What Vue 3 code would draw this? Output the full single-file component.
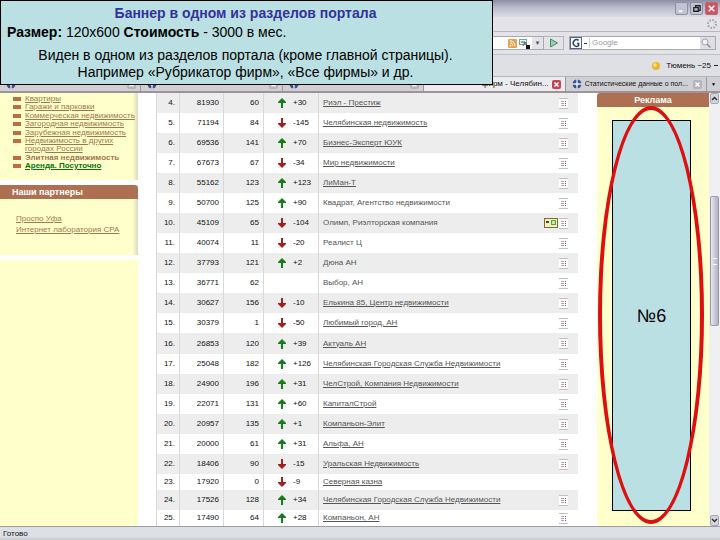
<template>
  <div class="window">
    <header class="chrome">
      <div class="title-bar">
        <button class="win-btn" aria-label="Свернуть">
          <svg viewBox="0 0 12 12"><path d="M3 9h4" stroke="#fff" stroke-width="2" /></svg>
        </button>
        <button class="win-btn" aria-label="Восстановить">
          <svg viewBox="0 0 12 12"><path d="M5 5V3h5v5H8M3 5h5v4H3z" fill="none" stroke="#222" stroke-width="1.4" /></svg>
        </button>
        <button class="win-btn win-close" aria-label="Закрыть">
          <svg viewBox="0 0 12 12"><path d="M3 3l6 6M9 3l-6 6" stroke="#fff" stroke-width="1.8" /></svg>
        </button>
      </div>

      <div class="menu-bar">
        <svg class="throbber" viewBox="0 0 12 12">
          <circle cx="6" cy="6" r="4" fill="none" stroke="#a4a4a8" stroke-width="2" stroke-dasharray="1.6 1.5" />
        </svg>
      </div>

      <div class="tool-bar">
        <div class="address">
          <input class="address-input" type="text" aria-label="Адрес" />
          <svg class="rss" viewBox="0 0 9 9">
            <rect width="9" height="9" rx="1" fill="#eba04c" />
            <circle cx="2.5" cy="6.6" r="0.9" fill="#fff" />
            <path d="M2 3.8a3 3 0 0 1 3 3M2 1.8a5 5 0 0 1 5 5" fill="none" stroke="#fff" />
          </svg>
          <svg class="translate" viewBox="0 0 11 11">
            <rect x="0.5" y="1.5" width="7" height="5" fill="#e5f1ee" stroke="#73a29f" />
            <path d="M2 4h4M4 8l2-4 2 4" stroke="#465b60" fill="none" />
            <rect x="7" y="7" width="4" height="4" fill="#151515" />
          </svg>
          <button class="drop" aria-label="История">▼</button>
        </div>
        <button class="go" aria-label="Перейти">
          <svg viewBox="0 0 10 10"><path d="M1.5 1l7 4-7 4z" fill="#9bceb0" stroke="#3d8c62" /></svg>
        </button>
        <div class="search">
          <button class="engine" aria-label="Поисковая система">
            <svg viewBox="0 0 12 12">
              <rect x="0.5" y="0.5" width="11" height="11" fill="#fff" stroke="#4c6584" />
              <path d="M8.6 3.4A3.3 3.3 0 1 0 8.6 8.6V6.4H7" fill="none" stroke="#27436a" stroke-width="1.5" />
            </svg>
          </button>
          <span class="engine-drop"></span>
          <input class="search-input" type="text" placeholder="Google" aria-label="Поиск" />
          <button class="find" aria-label="Найти">
            <svg viewBox="0 0 12 12"><circle cx="5" cy="5" r="3" fill="#eef1f4" stroke="#a0a4ae" /><path d="M7 7l3.5 3.5" stroke="#92969f" stroke-width="1.6" /></svg>
          </button>
        </div>
      </div>

      <div class="bookmarks">
        <svg class="sun" viewBox="0 0 10 10"><circle cx="5" cy="5" r="4" fill="#efb52c" /><circle cx="4" cy="4" r="1.8" fill="#ffe48a" /></svg>
        <span>Тюмень −25</span>
        <span class="more"></span>
      </div>

      <nav class="tabs">
        <div v-for="(tab, idx) in tabs" :key="idx" class="tab" :class="{ active: tab.active }">
          <svg v-if="!tab.active" class="tab-icon" viewBox="0 0 10 10">
            <circle cx="5" cy="5" r="4.5" fill="#39518d" />
            <path d="M5 0v10M0 5h10" stroke="#d6e0f2" stroke-width="1.4" />
            <circle cx="5" cy="5" r="1.6" fill="#e4ebf7" />
          </svg>
          <a href="#" class="tab-title">{{ tab.title }}</a>
          <button class="tab-close" aria-label="Закрыть вкладку">
            <svg viewBox="0 0 9 9"><path d="M2.5 2.5l4 4M6.5 2.5l-4 4" stroke="#fff" stroke-width="1.4" /></svg>
          </button>
        </div>
        <button class="tab-list" aria-label="Все вкладки">▼</button>
      </nav>
    </header>

    <div class="page">
      <aside class="sidebar">
        <section class="panel sections">
          <ul>
            <li v-for="s in sections" :key="s.name" :class="s.kind"><a href="#">{{ s.name }}</a></li>
          </ul>
        </section>
        <section class="panel partners">
          <h2>Наши партнеры</h2>
          <a href="#">Проспо Уфа</a>
          <a href="#">Интернет лаборатория СРА</a>
        </section>
        <section class="panel filler"></section>
      </aside>

      <main class="rating">
        <table>
          <colgroup>
            <col class="c-place" /><col class="c-views" /><col class="c-visits" /><col class="c-delta" /><col />
          </colgroup>
          <tbody>
            <tr v-for="f in firms" :key="f.place" :class="rowClass(f.place)">
              <td class="num">{{ f.place }}.</td>
              <td class="num">{{ f.views }}</td>
              <td class="num">{{ f.visits }}</td>
              <td>
                <div v-if="f.delta" class="delta">
                  <svg class="arrow" :class="isUp(f) ? 'up' : 'down'" viewBox="0 0 8 10">
                    <path d="M4 0l4 4v1H5v5H3V5H0V4z" />
                  </svg>
                  <span>{{ f.delta }}</span>
                </div>
              </td>
              <td>
                <div class="firm">
                  <a href="#" :class="{ plain: f.plain }">{{ f.name }}</a>
                  <svg v-if="f.card" class="card" viewBox="0 0 14 10">
                    <rect x="0.5" y="0.5" width="13" height="9" fill="#f3f2bd" stroke="#7f6b3c" />
                    <path d="M2 4h3" stroke="#5a4320" stroke-width="2" />
                    <rect x="7.5" y="2.5" width="4" height="4" fill="#bff0a4" stroke="#51a83e" />
                  </svg>
                  <svg v-if="f.place !== 23" class="doc" viewBox="0 0 9 11">
                    <rect width="9" height="11" fill="#fff" />
                    <path d="M0 .5h9M0 10.5h9" stroke="#c4c0c0" />
                    <path d="M2 3.5h3M2 5.5h3M2 7.5h3" stroke="#b4a6aa" />
                    <path d="M6.5 3v6" stroke="#a8485a" stroke-dasharray="1 1" />
                  </svg>
                </div>
              </td>
            </tr>
          </tbody>
        </table>
      </main>

      <aside class="ads">
        <h2>Реклама</h2>
        <div class="ad-slot">№6</div>
        <div class="ring"></div>
      </aside>

      <div class="scrollbar">
        <button class="scroll-btn" aria-label="Вверх">
          <svg viewBox="0 0 9 9"><path d="M2 6l2.5-2.5L7 6" fill="none" stroke="#333" stroke-width="1.5" /></svg>
        </button>
        <div class="track"><div class="thumb"></div></div>
        <button class="scroll-btn" aria-label="Вниз">
          <svg viewBox="0 0 9 9"><path d="M2 3l2.5 2.5L7 3" fill="none" stroke="#333" stroke-width="1.5" /></svg>
        </button>
      </div>
    </div>

    <footer class="status">Готово</footer>

    <section class="note">
      <h1>Баннер в одном из разделов портала</h1>
      <p class="price"><b>Размер:</b> 120x600 <b>Стоимость</b> - 3000 в мес.</p>
      <p>Виден в одном из разделов портала (кроме главной страницы).<br />Например «Рубрикатор фирм», «Все фирмы» и др.</p>
    </section>
  </div>
</template>

<script setup>
const tabs = [
  { title: '' },
  { title: '' },
  { title: '' },
  { title: 'фирм - Челябин...', active: true },
  { title: 'Статистические данные о пол...' },
]

const sections = [
  { name: 'Квартиры' },
  { name: 'Гаражи и парковки' },
  { name: 'Коммерческая недвижимость' },
  { name: 'Загородная недвижимость' },
  { name: 'Зарубежная недвижимость' },
  { name: 'Недвижимость в других городах России', kind: 'wrap' },
  { name: 'Элитная недвижимость', kind: 'strong' },
  { name: 'Аренда. Посуточно', kind: 'rent' },
]

const firms = [
  { place: 4, views: 81930, visits: 60, delta: '+30', name: 'Риэл - Престиж' },
  { place: 5, views: 71194, visits: 84, delta: '-145', name: 'Челябинская недвижимость' },
  { place: 6, views: 69536, visits: 141, delta: '+70', name: 'Бизнес-Эксперт ЮУК' },
  { place: 7, views: 67673, visits: 67, delta: '-34', name: 'Мир недвижимости' },
  { place: 8, views: 55162, visits: 123, delta: '+123', name: 'ЛиМан-Т' },
  { place: 9, views: 50700, visits: 125, delta: '+90', name: 'Квадрат, Агентство недвижимости', plain: true },
  { place: 10, views: 45109, visits: 65, delta: '-104', name: 'Олимп, Риэлторская компания', plain: true, card: true },
  { place: 11, views: 40074, visits: 11, delta: '-20', name: 'Реалист Ц', plain: true },
  { place: 12, views: 37793, visits: 121, delta: '+2', name: 'Дюна АН', plain: true },
  { place: 13, views: 36771, visits: 62, delta: '', name: 'Выбор, АН', plain: true },
  { place: 14, views: 30627, visits: 156, delta: '-10', name: 'Елькина 85, Центр недвижимости' },
  { place: 15, views: 30379, visits: 1, delta: '-50', name: 'Любимый город, АН' },
  { place: 16, views: 26853, visits: 120, delta: '+39', name: 'Актуаль АН' },
  { place: 17, views: 25048, visits: 182, delta: '+126', name: 'Челябинская Городская Служба Недвижимости' },
  { place: 18, views: 24900, visits: 196, delta: '+31', name: 'ЧелСтрой, Компания Недвижимости' },
  { place: 19, views: 22071, visits: 131, delta: '+60', name: 'КапиталСтрой' },
  { place: 20, views: 20957, visits: 135, delta: '+1', name: 'Компаньон-Элит' },
  { place: 21, views: 20000, visits: 61, delta: '+31', name: 'Альфа, АН' },
  { place: 22, views: 18406, visits: 90, delta: '-15', name: 'Уральская Недвижимость' },
  { place: 23, views: 17920, visits: 0, delta: '-9', name: 'Северная казна' },
  { place: 24, views: 17526, visits: 128, delta: '+34', name: 'Челябинская Городская Служба Недвижимости' },
  { place: 25, views: 17490, visits: 64, delta: '+28', name: 'Компаньон, АН' },
]

function isUp(f) {
  return f.delta.startsWith('+')
}

function rowClass(place) {
  return {
    shaded: place % 2 === 0,
    tall: place === 16,
    short: place === 23 || place === 25,
  }
}
</script>

<style>
body { margin: 0; background: #fff; }
</style>

<style scoped>
* { box-sizing: border-box; }
h1, h2, p, ul { margin: 0; padding: 0; }
button { padding: 0; border: 0; background: none; font: inherit; }
input { min-width: 0; padding: 0; border: 0; background: none; font: inherit; }
svg { display: block; flex: none; }

.window { position: relative; display: flex; flex-direction: column; min-height: 100vh; font: 8px/10px "Liberation Sans", Arial, sans-serif; color: #111; }

.chrome { background: #e3e3e8; }
.title-bar { display: flex; justify-content: flex-end; align-items: center; gap: 2px; height: 17px; padding-right: 2px; background: linear-gradient(#8c8ca6, #b8b8ca 40%, #dcdce8); }
.win-btn { width: 13px; height: 13px; border: 1px solid #8e8ea4; border-radius: 2px; background: #c2c3d2; }
.win-btn svg { width: 11px; height: 11px; }
.win-close { border-color: #b86a74; background: #cc5563; }
.menu-bar { display: flex; justify-content: flex-end; align-items: center; height: 15px; padding-right: 2px; border-bottom: 1px solid #b6b6be; }
.throbber { width: 12px; height: 12px; }

.tool-bar { display: flex; align-items: center; height: 23px; padding-right: 4px; border-bottom: 1px solid #c0c0c8; }
.address { display: flex; align-items: center; flex: 1; gap: 2px; height: 14px; border: 1px solid #a8a8b2; background: #fff; }
.address-input { flex: 1; }
.rss { width: 9px; height: 9px; }
.translate { width: 11px; height: 11px; }
.drop { width: 11px; height: 12px; background: #e3e3e8; font-size: 6px; color: #555; }
.go { display: flex; align-items: center; justify-content: center; width: 20px; height: 14px; border: 1px solid #b4b4bc; border-left: 0; }
.go svg { width: 10px; height: 10px; }
.search { display: flex; align-items: center; width: 147px; height: 14px; margin-left: 5px; border: 1px solid #a8a8b2; background: #fff; }
.engine svg { width: 12px; height: 12px; }
.engine-drop { width: 3px; height: 1px; margin: 0 2px; background: #333; }
.search-input { flex: 1; padding-left: 2px; border-left: 1px solid #d0d0d4; font-size: 8px; }
.search-input::placeholder { color: #9a9aa0; opacity: 1; }
.find { width: 15px; height: 12px; background: #dedee4; }
.find svg { width: 12px; height: 12px; }

.bookmarks { display: flex; justify-content: flex-end; align-items: center; height: 21px; padding-right: 2px; background: #dfe0e4; }
.sun { width: 10px; height: 10px; margin-right: 5px; }
.more { width: 4px; height: 1px; margin-left: 3px; background: #222; }

.tabs { display: flex; height: 17px; border-top: 1px solid #b4b4ba; border-bottom: 2px solid #9c949a; background: #cfcfd4; }
.tab { display: flex; align-items: center; gap: 3px; flex: 1; min-width: 0; padding: 0 4px 0 6px; border-right: 1px solid #98989e; }
.tab.active { background: #ececf0; }
.tab-icon { width: 10px; height: 10px; }
.tab-title { flex: 1; overflow: hidden; color: #111; font-size: 7px; text-decoration: none; white-space: nowrap; }
.tab.active .tab-title { font-size: 8px; text-align: right; }
.tab-close { width: 9px; height: 9px; border-radius: 2px; background: #b4b4b8; }
.tab.active .tab-close { background: #bf4650; }
.tab-list { width: 13px; font-size: 5px; }

.page { display: flex; flex: 1; }

.sidebar { display: flex; flex-direction: column; gap: 5px; width: 138px; margin-right: 18px; }
.panel { background: linear-gradient(90deg, #ffffcb 96%, #dddac0); }
.sections { height: 87px; padding-top: 2px; }
.sections ul { list-style: none; }
.sections li { position: relative; padding-left: 25px; line-height: 8px; }
.sections li:nth-child(even) { padding-bottom: 1px; }
.sections li::before { content: ""; position: absolute; left: 13px; top: 2px; width: 8px; height: 4px; background: #bd6d40; }
.sections a { color: #a07850; white-space: nowrap; }
.sections .wrap a { display: block; width: 92px; white-space: normal; }
.sections .strong a { font-weight: bold; text-decoration: none; }
.sections .rent a { font-weight: bold; color: #087008; }
.partners { display: flex; flex-direction: column; align-items: flex-start; gap: 1px; height: 70px; }
.partners h2 { align-self: stretch; height: 14px; margin-bottom: 14px; padding-left: 12px; border-top-right-radius: 4px; background: #ad7052; color: #fff; font-size: 9px; line-height: 14px; }
.partners a { margin-left: 16px; color: #a07850; }
.filler { flex: 1; background: #ffffcb; }

.rating { flex: 1; min-width: 0; }
.rating table { width: 100%; border-collapse: collapse; table-layout: fixed; }
.c-place { width: 23px; }
.c-views { width: 44px; }
.c-visits { width: 40px; }
.c-delta { width: 55px; }
.rating tr { height: 20px; }
.rating tr.tall { height: 21px; }
.rating tr.short { height: 16px; }
.rating tr.shaded { background: #ededed; }
.rating td { padding: 0; box-shadow: inset 1px 0 #d8d8d8; vertical-align: middle; }
.rating .num { padding-right: 4px; text-align: right; }
.delta { display: flex; align-items: center; gap: 7px; padding-left: 15px; }
.arrow { width: 8px; height: 10px; }
.up { fill: #187c1c; }
.down { fill: #a02020; transform: rotate(180deg); }
.firm { display: flex; align-items: center; gap: 1px; padding: 0 10px 0 5px; }
.firm a { flex: 1; color: #555; white-space: nowrap; }
.firm .plain { text-decoration: none; }
.card { width: 14px; height: 10px; }
.doc { width: 9px; height: 11px; }

.ads { position: relative; display: flex; flex-direction: column; width: 112px; margin-left: 19px; background: #ffffcb; }
.ads h2 { height: 14px; border-top-left-radius: 3px; background: #ad7052; color: #fff; font-size: 9px; line-height: 15px; text-align: center; }
.ad-slot { display: flex; align-items: center; justify-content: center; flex: 1; margin: 13px 18px 15px 15px; border: 1px solid #000; background: #bbe0e3; color: #000; font-size: 18px; line-height: 20px; }
.ring { position: absolute; inset: 13px 5px 2px 1px; border: 4px solid #dc1010; border-radius: 50%; }

.scrollbar { display: flex; flex-direction: column; width: 11px; padding: 0 1px; background: #f0f0f2; }
.scroll-btn { display: flex; align-items: center; justify-content: center; height: 11px; border: 1px solid #a8a8b4; border-radius: 2px; background: #d4d4de; }
.scroll-btn svg { width: 9px; height: 9px; }
.track { display: flex; flex-direction: column; flex: 1; padding-top: 92px; }
.thumb { display: flex; align-items: center; justify-content: center; height: 130px; border: 1px solid #9a9aaa; border-radius: 2px; background: linear-gradient(90deg, #e8e8f0, #b0b0c0); }
.thumb::before { content: ""; width: 4px; height: 5px; border: solid #fff; border-width: 1px 0; }

.status { height: 14px; padding-left: 3px; border-top: 1px solid #9c9ca2; background: linear-gradient(#dde0e5 70%, #c6cace); line-height: 13px; }

.note { position: absolute; top: 0; left: 0; width: 493px; padding: 4px 8px 3px 6px; border: 1px solid #000; background: #bbe0e3; color: #000; font-size: 14px; line-height: 17px; text-align: center; }
.note h1 { color: #333399; font-size: 14px; line-height: 17px; }
.note .price { margin: 2px 0 6px; text-align: left; }
</style>
